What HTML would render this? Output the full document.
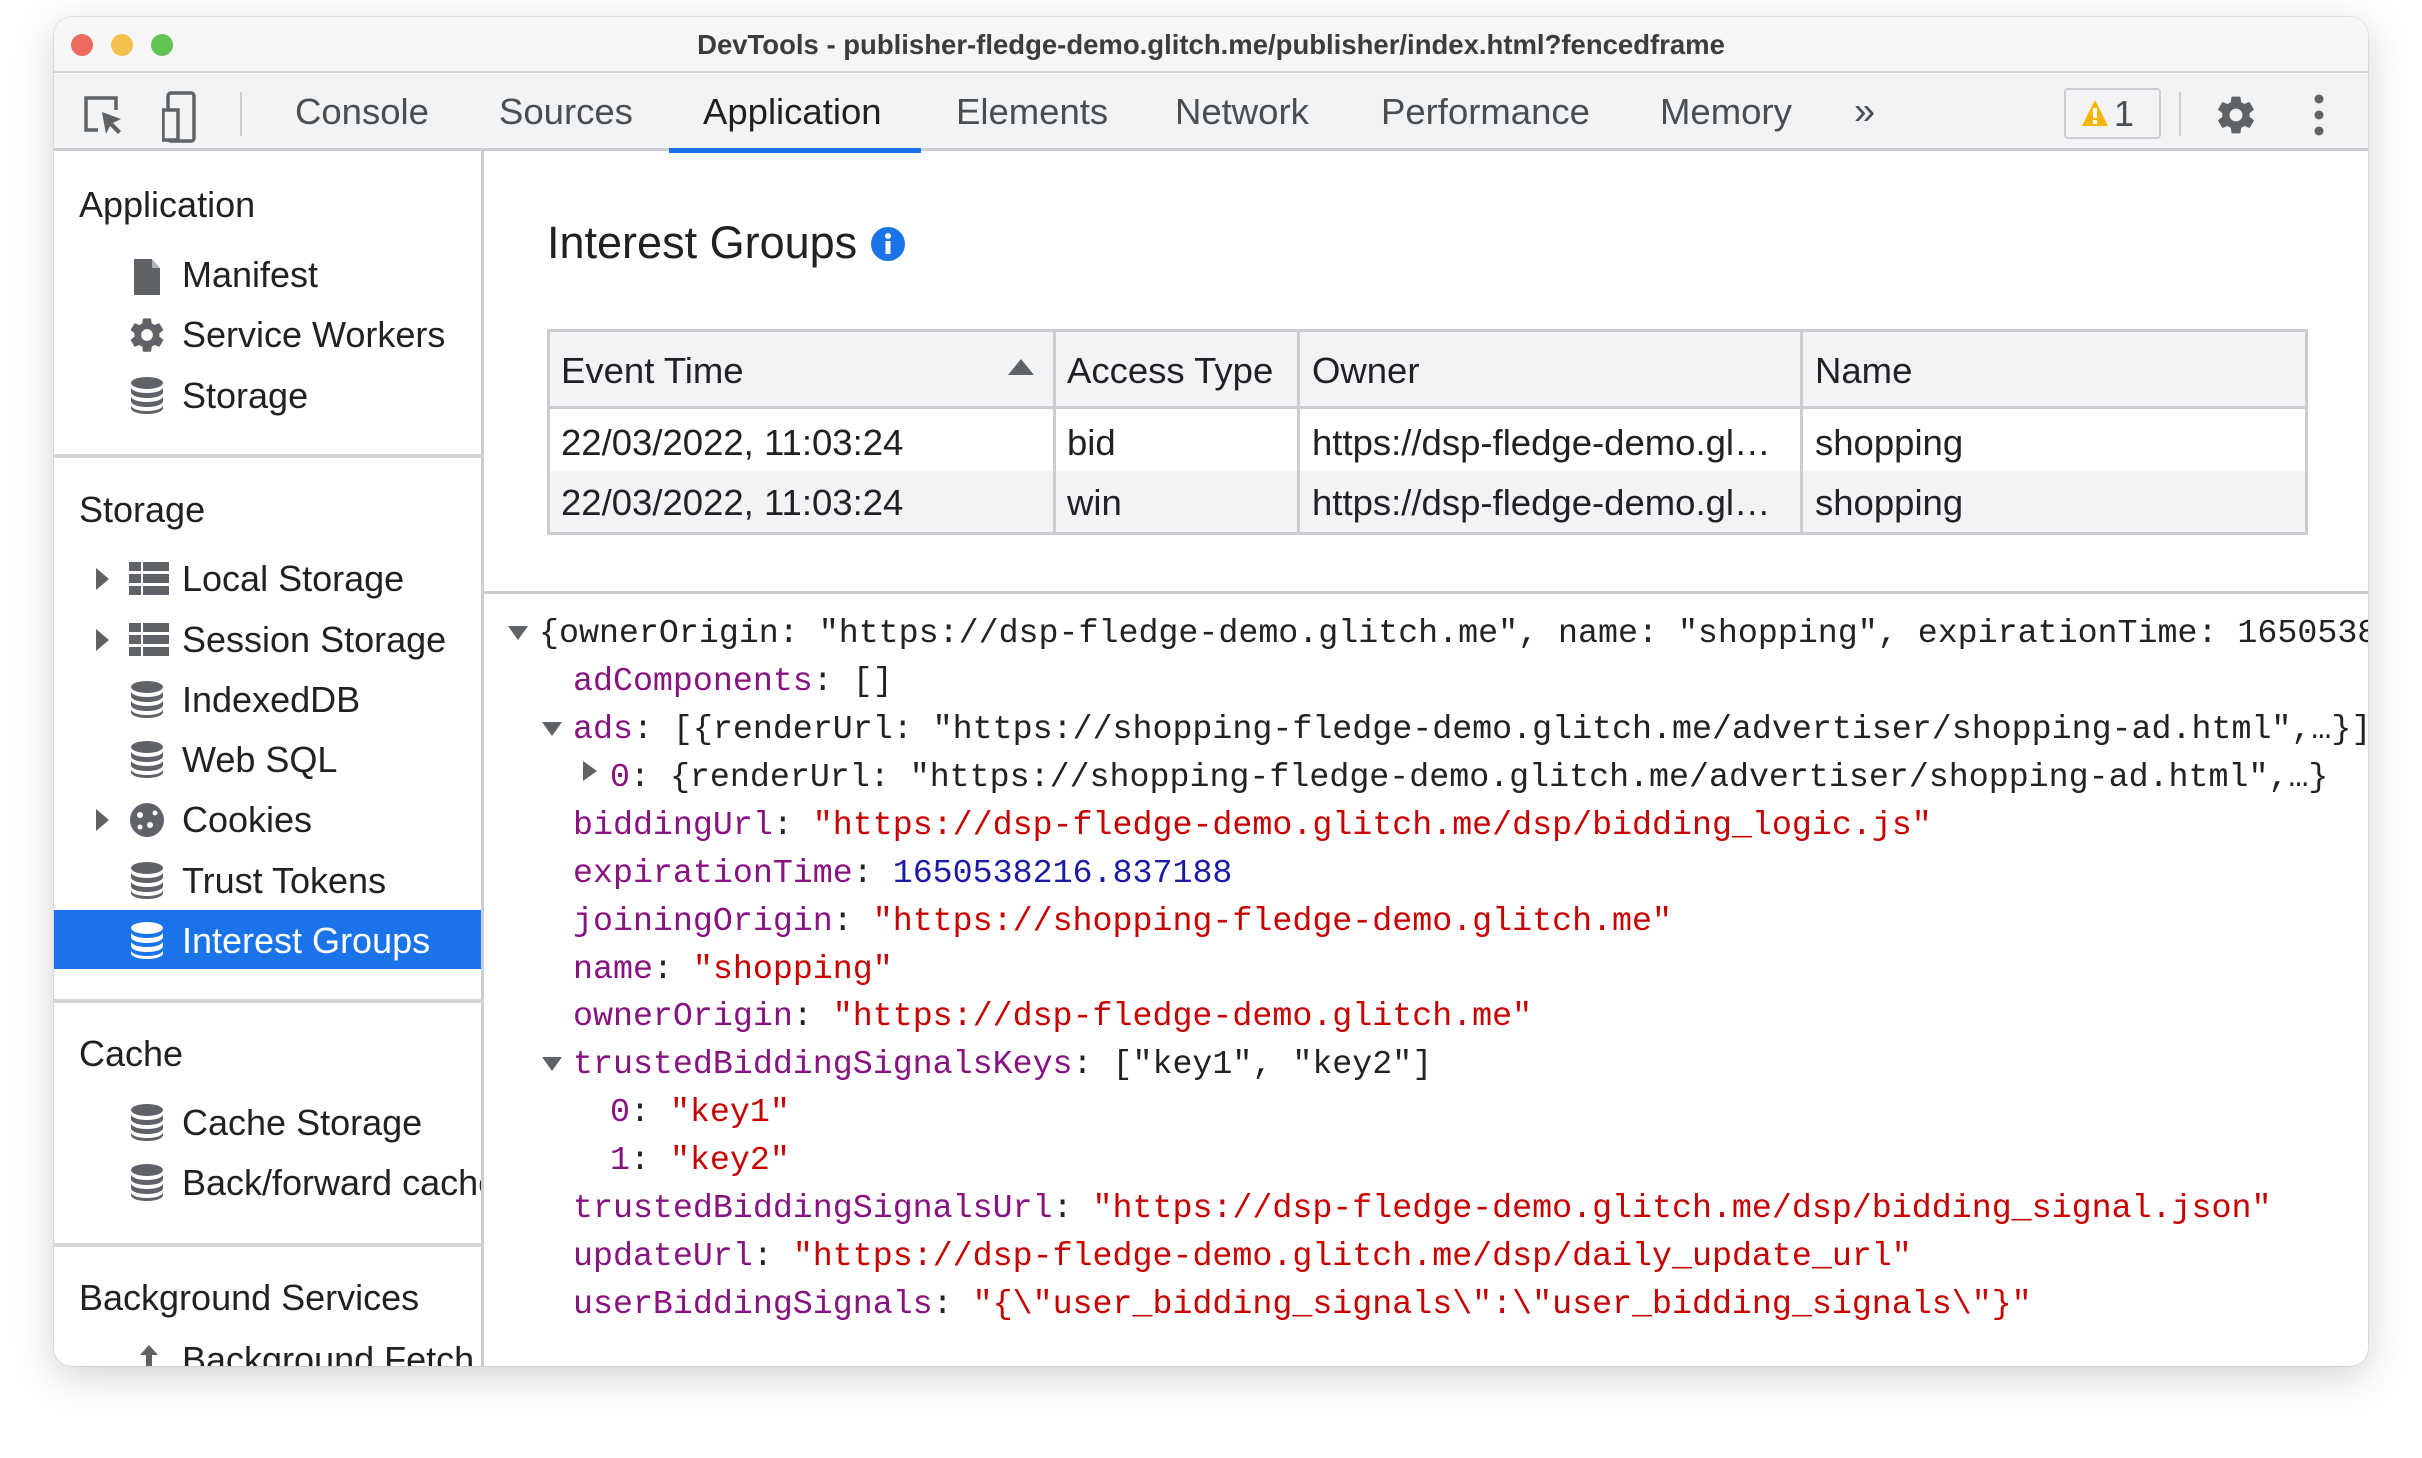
<!DOCTYPE html>
<html><head><meta charset="utf-8"><style>
*{margin:0;padding:0;box-sizing:border-box}
body{width:2422px;height:1458px;background:#fff;position:relative;overflow:hidden;font-family:"Liberation Sans",sans-serif;color:#202124}
.win{position:absolute;left:54px;top:17px;width:2314px;height:1349px;border-radius:18px;overflow:hidden;background:#fff;box-shadow:0 10px 40px rgba(0,0,0,.18),0 0 0 1px rgba(0,0,0,.08)}
.a{position:absolute;white-space:nowrap}
.c{line-height:60px;transform:translateY(-30px)}
.title{left:0;right:0;top:0;height:56px;background:#f6f6f6;border-bottom:2px solid #d4d4d4}
.dot{position:absolute;width:22px;height:22px;border-radius:50%;top:17px}
.tb{left:0;right:0;top:57px;height:77px;background:#f1f3f4;border-bottom:3px solid #cbcdd1}
.tab{font-size:36.5px;color:#4a4d51;top:55px}
.side{left:0;top:134px;width:430px;height:1300px;border-right:3px solid #cbcdd1;background:#fff}
.hd{font-size:36px;color:#202124;left:25px}
.it{font-size:36px;color:#202124;left:128px}
.hr{position:absolute;left:0;width:430px;height:4px;background:#d3d4d7}
.ic{position:absolute;left:76px}
.arr{position:absolute;left:42px;width:0;height:0;border-top:11px solid transparent;border-bottom:11px solid transparent;border-left:13px solid #5f6368}
.mono{font-family:"Liberation Mono",monospace;font-size:33.3px;line-height:47.9px;color:#222}
.k{color:#881280}.s{color:#c80000}.n{color:#1a1aa6}
.tri{position:absolute;width:0;height:0}
.down{border-left:10px solid transparent;border-right:10px solid transparent;border-top:14px solid #5f6368}
.right{border-top:10px solid transparent;border-bottom:10px solid transparent;border-left:14px solid #5f6368}
.td{font-size:36.5px;transform:translateY(-50%)}
</style></head><body>
<div class="win">
 <div class="a title"></div>
 <div class="dot" style="left:17px;background:#ec6a5e"></div>
 <div class="dot" style="left:57px;background:#f4bf4f"></div>
 <div class="dot" style="left:97px;background:#61c554"></div>
 <div class="a" style="left:0;right:0;top:28px;transform:translateY(-50%);text-align:center;font-size:27.5px;font-weight:bold;color:#3c3c3c">DevTools - publisher-fledge-demo.glitch.me/publisher/index.html?fencedframe</div>
 <div class="a tb"></div>
 <svg class="a" style="left:28px;top:75px" width="44" height="48" viewBox="0 0 44 48"><path d="M16 38H4V6h30v12" fill="none" stroke="#5f6368" stroke-width="3.5"/><path d="M20 20l4 22 4-8 8 8 3-3-8-8 8-4z" fill="#5f6368"/></svg>
 <svg class="a" style="left:108px;top:73px" width="34" height="54" viewBox="0 0 34 54"><rect x="6" y="3" width="26" height="48" rx="3" fill="none" stroke="#5f6368" stroke-width="3.5"/><rect x="1" y="20" width="15" height="30" fill="#f1f3f4" stroke="#5f6368" stroke-width="3.5"/></svg>
 <div class="a" style="left:186px;top:75px;width:2px;height:44px;background:#cbcdd1"></div>
 <div class="a tab" style="left:241px;top:95px;transform:translateY(-50%)">Console</div>
 <div class="a tab" style="left:445px;top:95px;transform:translateY(-50%)">Sources</div>
 <div class="a tab" style="left:649px;top:95px;transform:translateY(-50%);color:#1f1f1f">Application</div>
 <div class="a" style="left:615px;top:131px;width:252px;height:5px;background:#1a73e8"></div>
 <div class="a tab" style="left:902px;top:95px;transform:translateY(-50%)">Elements</div>
 <div class="a tab" style="left:1121px;top:95px;transform:translateY(-50%)">Network</div>
 <div class="a tab" style="left:1327px;top:95px;transform:translateY(-50%)">Performance</div>
 <div class="a tab" style="left:1606px;top:95px;transform:translateY(-50%)">Memory</div>
 <div class="a tab" style="left:1800px;top:95px;transform:translateY(-50%);font-size:38px">»</div>
 <div class="a" style="left:2010px;top:71px;width:97px;height:51px;border:2px solid #cbcdd1;border-radius:4px;background:#f1f3f4"></div>
 <svg class="a" style="left:2027px;top:81px" width="28" height="30" viewBox="0 0 28 30"><path d="M14 2L27 28H1z" fill="#f4b400"/><rect x="12" y="10" width="4" height="10" fill="#fff"/><rect x="12" y="22" width="4" height="4" fill="#fff"/></svg>
 <div class="a" style="left:2060px;top:97px;transform:translateY(-50%);font-size:36px;color:#4a4d51">1</div>
 <div class="a" style="left:2125px;top:75px;width:2px;height:44px;background:#cbcdd1"></div>
 <svg class="a" style="left:2160px;top:76px" width="44" height="44" viewBox="0 0 24 24"><path fill="#5f6368" d="M19.4 13c.04-.3.06-.64.06-1s-.02-.7-.07-1l2.1-1.650c.2-.15.24-.42.12-.64l-2-3.46c-.12-.22-.39-.3-.61-.22l-2.49 1c-.52-.4-1.080-.73-1.69-.98l-.38-2.65A.49.49 0 0 0 14 2h-4c-.25 0-.46.18-.49.42l-.38 2.65c-.61.25-1.17.59-1.69.98l-2.49-1a.5.5 0 0 0-.61.22l-2 3.46c-.13.22-.07.49.12.64L4.57 11c-.05.3-.07.65-.07 1s.02.7.07 1l-2.11 1.65c-.19.15-.24.42-.12.64l2 3.46c.12.22.39.3.61.22l2.49-1c.52.4 1.080.73 1.69.98l.38 2.65c.03.24.24.42.49.42h4c.25 0 .46-.18.49-.42l.38-2.65c.61-.25 1.17-.59 1.69-.98l2.49 1c.23.09.49 0 .61-.22l2-3.46c.12-.22.07-.49-.12-.64L19.4 13zM12 15.5a3.5 3.5 0 1 1 0-7 3.5 3.5 0 0 1 0 7z"/></svg>
 <svg class="a" style="left:2259px;top:76px" width="12" height="44" viewBox="0 0 12 44"><circle cx="6" cy="6" r="4.5" fill="#5f6368"/><circle cx="6" cy="22" r="4.5" fill="#5f6368"/><circle cx="6" cy="38" r="4.5" fill="#5f6368"/></svg>

 <div class="a side"></div>
 <div class="a hd c" style="top:188px">Application</div>
 <svg class="ic" style="top:240px;left:78px" width="30" height="40" viewBox="0 0 30 40"><path d="M2 2h18l8 9v27H2z" fill="#5f6368"/><path d="M20 2v9h8" fill="#fff" opacity=".5"/></svg>
 <div class="a it c" style="top:258px">Manifest</div>
 <svg class="ic" style="top:298px;left:73px" width="40" height="40" viewBox="0 0 24 24"><path fill="#5f6368" d="M19.4 13c.04-.3.06-.64.06-1s-.02-.7-.07-1l2.1-1.65c.2-.15.24-.42.12-.64l-2-3.46c-.12-.22-.39-.3-.61-.22l-2.49 1c-.52-.4-1.08-.73-1.69-.98l-.38-2.65A.49.49 0 0 0 14 2h-4c-.25 0-.46.18-.49.42l-.38 2.65c-.61.25-1.17.59-1.69.98l-2.49-1a.5.5 0 0 0-.61.22l-2 3.46c-.13.22-.07.49.12.64L4.57 11c-.05.3-.07.65-.07 1s.02.7.07 1l-2.11 1.65c-.19.15-.24.42-.12.64l2 3.46c.12.22.39.3.61.22l2.49-1c.52.4 1.08.73 1.69.98l.38 2.65c.03.24.24.42.49.42h4c.25 0 .46-.18.49-.42l.38-2.65c.61-.25 1.17-.59 1.69-.98l2.49 1c.23.09.49 0 .61-.22l2-3.46c.12-.22.07-.49-.12-.64L19.4 13zM12 15.5a3.5 3.5 0 1 1 0-7 3.5 3.5 0 0 1 0 7z"/></svg>
 <div class="a it c" style="top:318px">Service Workers</div>
 <div class="a it c" style="top:379px">Storage</div>
 <div class="hr" style="top:437px"></div>
 <div class="a hd c" style="top:493px">Storage</div>
 <div class="arr" style="top:551px"></div>
 <div class="a it c" style="top:562px">Local Storage</div>
 <div class="arr" style="top:612px"></div>
 <div class="a it c" style="top:623px">Session Storage</div>
 <div class="a it c" style="top:683px">IndexedDB</div>
 <div class="a it c" style="top:743px">Web SQL</div>
 <div class="arr" style="top:792px"></div>
 <svg class="ic" style="top:784px;left:74px" width="38" height="38" viewBox="0 0 38 38"><circle cx="19" cy="19" r="17" fill="#5f6368"/><circle cx="12" cy="14" r="3" fill="#fff"/><circle cx="22" cy="24" r="3" fill="#fff"/><circle cx="12" cy="26" r="2.5" fill="#fff"/><circle cx="27" cy="12" r="2.5" fill="#fff"/></svg>
 <div class="a it c" style="top:803px">Cookies</div>
 <div class="a it c" style="top:864px">Trust Tokens</div>
 <div class="a" style="left:0;top:893px;width:427px;height:59px;background:#1a73e8"></div>
 <div class="a it c" style="top:924px;color:#fff">Interest Groups</div>
 <div class="hr" style="top:982px"></div>
 <div class="a hd c" style="top:1037px">Cache</div>
 <div class="a it c" style="top:1106px">Cache Storage</div>
 <div class="a it c" style="top:1166px;width:299px;overflow:hidden">Back/forward cache</div>
 <div class="hr" style="top:1226px"></div>
 <div class="a hd c" style="top:1281px">Background Services</div>
 <svg class="ic" style="top:1326px;left:80px" width="30" height="30" viewBox="0 0 30 30"><path d="M15 2L6 12h6v18h6V12h6z" fill="#5f6368"/></svg>
 <div class="a it c" style="top:1343px;width:299px;overflow:hidden">Background Fetch</div>

 <svg class="ic" style="top:545px;left:75px" width="40" height="34" viewBox="0 0 40 34"><g fill="#5f6368"><rect x="0" y="0" width="12" height="9"/><rect x="14" y="0" width="26" height="9"/><rect x="0" y="12" width="12" height="9"/><rect x="14" y="12" width="26" height="9"/><rect x="0" y="24" width="12" height="9"/><rect x="14" y="24" width="26" height="9"/></g></svg>
 <svg class="ic" style="top:606px;left:75px" width="40" height="34" viewBox="0 0 40 34"><g fill="#5f6368"><rect x="0" y="0" width="12" height="9"/><rect x="14" y="0" width="26" height="9"/><rect x="0" y="12" width="12" height="9"/><rect x="14" y="12" width="26" height="9"/><rect x="0" y="24" width="12" height="9"/><rect x="14" y="24" width="26" height="9"/></g></svg>
 <svg width="0" height="0" style="position:absolute"><defs><g id="db"><ellipse cx="17" cy="6" rx="16" ry="6"/><path d="M1 10c0 3.5 7 6 16 6s16-2.5 16-6v5c0 3.5-7 6-16 6S1 18.5 1 15z"/><path d="M1 19c0 3.5 7 6 16 6s16-2.5 16-6v5c0 3.5-7 6-16 6S1 27.5 1 24z"/><path d="M1 28c0 3.5 7 6 16 6s16-2.5 16-6v3c0 3.5-7 6-16 6S1 34.5 1 31z"/></g></defs></svg>
 <svg class="ic" style="top:360px" width="36" height="40"><use href="#db" fill="#5f6368"/></svg>
 <svg class="ic" style="top:664px" width="36" height="40"><use href="#db" fill="#5f6368"/></svg>
 <svg class="ic" style="top:724px" width="36" height="40"><use href="#db" fill="#5f6368"/></svg>
 <svg class="ic" style="top:845px" width="36" height="40"><use href="#db" fill="#5f6368"/></svg>
 <svg class="ic" style="top:905px" width="36" height="40"><use href="#db" fill="#fff"/></svg>
 <svg class="ic" style="top:1087px" width="36" height="40"><use href="#db" fill="#5f6368"/></svg>
 <svg class="ic" style="top:1147px" width="36" height="40"><use href="#db" fill="#5f6368"/></svg>

 <div class="a" style="left:493px;top:226px;transform:translateY(-50%);font-size:45px;color:#202124">Interest Groups</div>
 <svg class="a" style="left:816px;top:209px" width="36" height="36" viewBox="0 0 36 36"><circle cx="18" cy="18" r="17" fill="#1a73e8"/><rect x="15.5" y="15" width="5" height="13" fill="#fff"/><circle cx="18" cy="10" r="3" fill="#fff"/></svg>
 <div class="a" style="left:493px;top:312px;width:1761px;height:206px;border:3px solid #cbcdd1;background:#fff"></div>
 <div class="a" style="left:496px;top:315px;width:1755px;height:77px;background:#f1f3f4;border-bottom:3px solid #cbcdd1"></div>
 <div class="a" style="left:496px;top:454px;width:1755px;height:61px;background:#f1f3f4"></div>
 <div class="a" style="left:999px;top:315px;width:3px;height:200px;background:#cbcdd1"></div>
 <div class="a" style="left:1243px;top:315px;width:3px;height:200px;background:#cbcdd1"></div>
 <div class="a" style="left:1746px;top:315px;width:3px;height:200px;background:#cbcdd1"></div>
 <svg class="a" style="left:952px;top:340px" width="30" height="20"><path d="M15 2L28 18H2z" fill="#5f6368"/></svg>
 <div class="a td" style="top:354px;left:507px">Event Time</div>
 <div class="a td" style="top:354px;left:1013px">Access Type</div>
 <div class="a td" style="top:354px;left:1258px">Owner</div>
 <div class="a td" style="top:354px;left:1761px">Name</div>
 <div class="a td" style="top:426px;left:507px">22/03/2022, 11:03:24</div>
 <div class="a td" style="top:426px;left:1013px">bid</div>
 <div class="a td" style="top:426px;left:1258px">https://dsp-fledge-demo.gl…</div>
 <div class="a td" style="top:426px;left:1761px">shopping</div>
 <div class="a td" style="top:486px;left:507px">22/03/2022, 11:03:24</div>
 <div class="a td" style="top:486px;left:1013px">win</div>
 <div class="a td" style="top:486px;left:1258px">https://dsp-fledge-demo.gl…</div>
 <div class="a td" style="top:486px;left:1761px">shopping</div>
 <div class="a" style="left:430px;top:574px;width:1884px;height:3px;background:#cbcdd1"></div>

 <div class="tri down a" style="left:454px;top:609px"></div>
 <div class="tri down a" style="left:488px;top:705px"></div>
 <div class="tri right a" style="left:529px;top:744px"></div>
 <div class="tri down a" style="left:488px;top:1040px"></div>
 <div class="a mono" style="left:485px;top:593px">{ownerOrigin: "https://dsp-fledge-demo.glitch.me", name: "shopping", expirationTime: 1650538216.837188, …}</div>
 <div class="a mono" style="left:519px;top:641px"><span class="k">adComponents</span>: []</div>
 <div class="a mono" style="left:519px;top:689px"><span class="k">ads</span>: [{renderUrl: "https://shopping-fledge-demo.glitch.me/advertiser/shopping-ad.html",…}]</div>
 <div class="a mono" style="left:556px;top:737px"><span class="k">0</span>: {renderUrl: "https://shopping-fledge-demo.glitch.me/advertiser/shopping-ad.html",…}</div>
 <div class="a mono" style="left:519px;top:785px"><span class="k">biddingUrl</span>: <span class="s">"https://dsp-fledge-demo.glitch.me/dsp/bidding_logic.js"</span></div>
 <div class="a mono" style="left:519px;top:833px"><span class="k">expirationTime</span>: <span class="n">1650538216.837188</span></div>
 <div class="a mono" style="left:519px;top:881px"><span class="k">joiningOrigin</span>: <span class="s">"https://shopping-fledge-demo.glitch.me"</span></div>
 <div class="a mono" style="left:519px;top:929px"><span class="k">name</span>: <span class="s">"shopping"</span></div>
 <div class="a mono" style="left:519px;top:976px"><span class="k">ownerOrigin</span>: <span class="s">"https://dsp-fledge-demo.glitch.me"</span></div>
 <div class="a mono" style="left:519px;top:1024px"><span class="k">trustedBiddingSignalsKeys</span>: ["key1", "key2"]</div>
 <div class="a mono" style="left:556px;top:1072px"><span class="k">0</span>: <span class="s">"key1"</span></div>
 <div class="a mono" style="left:556px;top:1120px"><span class="k">1</span>: <span class="s">"key2"</span></div>
 <div class="a mono" style="left:519px;top:1168px"><span class="k">trustedBiddingSignalsUrl</span>: <span class="s">"https://dsp-fledge-demo.glitch.me/dsp/bidding_signal.json"</span></div>
 <div class="a mono" style="left:519px;top:1216px"><span class="k">updateUrl</span>: <span class="s">"https://dsp-fledge-demo.glitch.me/dsp/daily_update_url"</span></div>
 <div class="a mono" style="left:519px;top:1264px"><span class="k">userBiddingSignals</span>: <span class="s">"{\"user_bidding_signals\":\"user_bidding_signals\"}"</span></div>
</div>
</body></html>
